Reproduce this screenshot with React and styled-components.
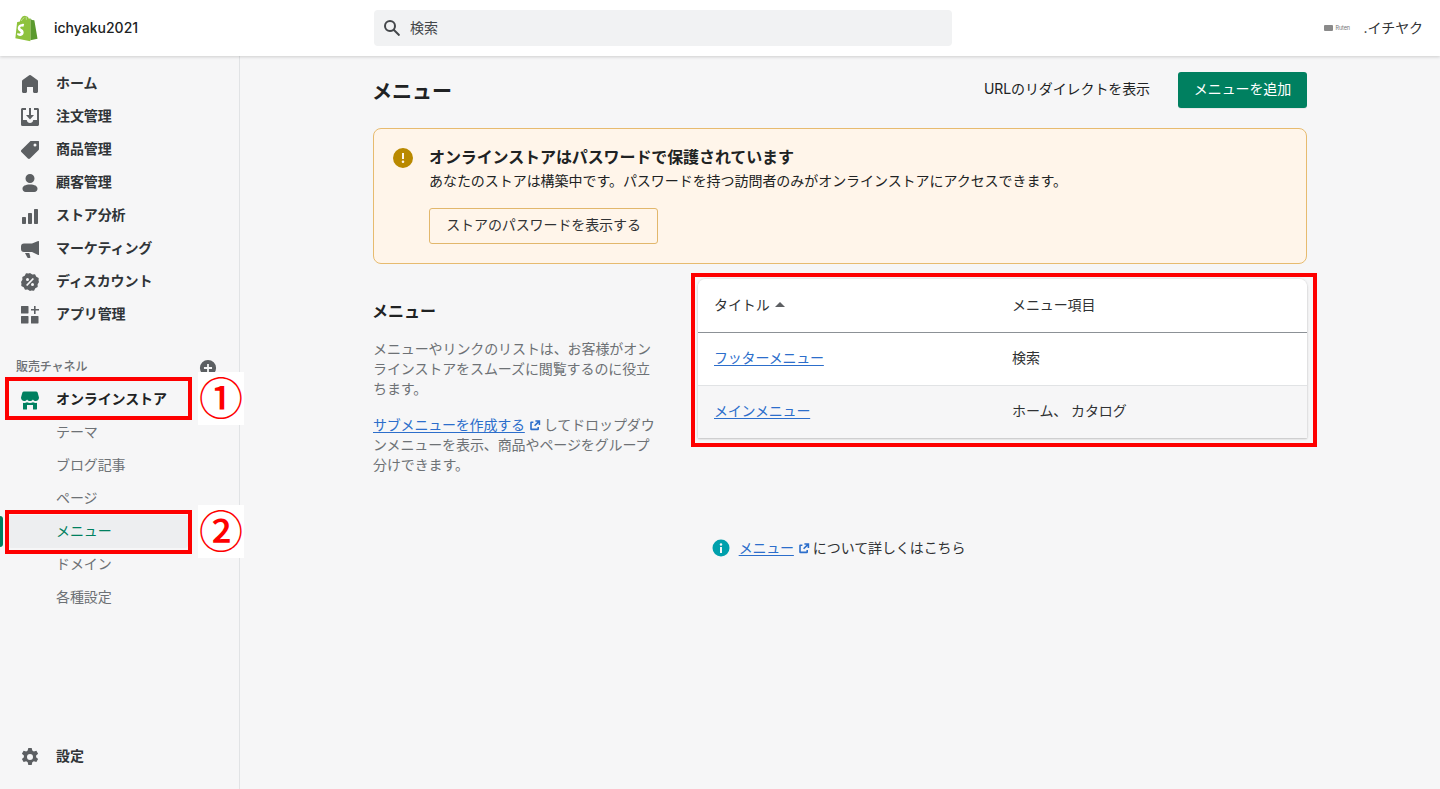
import React from 'react';
import styled, { createGlobalStyle } from 'styled-components';

const FONT = `Inter, "Noto Sans CJK JP", "Noto Sans", sans-serif`;

const GlobalStyle = createGlobalStyle`
  html, body { margin: 0; padding: 0; }
  body {
    background: #f6f6f7;
    color: #202223;
    font-family: ${FONT};
    font-size: 14px;
    line-height: 20px;
    letter-spacing: -0.1px;
  }
  * { box-sizing: border-box; }
`;

const Root = styled.div`
  position: relative;
  width: 1440px;
  height: 789px;
  overflow: hidden;
`;

const TopBar = styled.header`
  position: relative;
  z-index: 2;
  height: 56px;
  background: #fff;
  box-shadow: 0 1px 3px rgba(23, 24, 24, 0.18);
  display: flex;
  align-items: center;
`;

const Brand = styled.div`
  width: 374px;
  padding-left: 15px;
  display: flex;
  align-items: center;
  gap: 15px;
  font-weight: 500;
  letter-spacing: 0;
`;

const Search = styled.div`
  width: 578px;
  height: 36px;
  border-radius: 4px;
  background: #f1f2f3;
  display: flex;
  align-items: center;
  gap: 8px;
  padding-left: 8px;
  color: #44474a;
`;

const Account = styled.div`
  margin-left: auto;
  padding-right: 17px;
  display: flex;
  align-items: center;
  gap: 10px;
  color: #303234;
`;

const RutenLogo = styled.span`
  width: 29px;
  display: flex;
  align-items: center;
  gap: 2px;
  font-size: 5.5px;
  line-height: 8px;
  color: #777;
  white-space: nowrap;
  &::before {
    content: '';
    width: 9px;
    height: 6px;
    border-radius: 1px;
    background: #8a8a8a;
  }
`;

const Body = styled.div`
  display: flex;
  height: 733px;
`;

const Sidebar = styled.nav`
  width: 240px;
  flex: none;
  border-right: 1px solid #e1e3e5;
  padding: 11px 0 16px;
  display: flex;
  flex-direction: column;
`;

const NavItem = styled.div`
  height: 33px;
  padding: 0 0 2px 20px;
  display: flex;
  align-items: center;
  gap: 16px;
  font-weight: 600;
  color: ${p => (p.$active ? '#202223' : '#303437')};
  svg {
    flex: none;
    margin-top: 2px;
    color: ${p => (p.$active ? '#008060' : '#5c5f62')};
  }
`;

const ChannelHead = styled.div`
  margin-top: 22px;
  height: 30px;
  padding: 0 22px 2px 16px;
  display: flex;
  align-items: center;
  justify-content: space-between;
  font-size: 12px;
  color: #6d7175;
  font-weight: 500;
  svg { color: #5c5f62; margin-top: 2px; }
`;

const SubItem = styled.div`
  position: relative;
  height: 33px;
  width: 180px;
  margin-left: 8px;
  padding: 0 0 2px 48px;
  display: flex;
  align-items: center;
  border-radius: 3px;
  color: ${p => (p.$active ? '#008060' : '#6d7175')};
  background: ${p => (p.$active ? '#edeef0' : 'transparent')};
  ${p => p.$active && `
    &::before {
      content: '';
      position: absolute;
      left: -8px;
      top: 1px;
      bottom: 1px;
      width: 3px;
      border-radius: 0 3px 3px 0;
      background: #008060;
    }
  `}
`;

const SidebarBottom = styled.div`
  margin-top: auto;
`;

const Main = styled.main`
  flex: 1;
  min-width: 0;
`;

const Page = styled.div`
  width: 934px;
  margin: 0 auto;
  padding-top: 16px;
`;

const PageHeader = styled.div`
  height: 36px;
  display: flex;
  align-items: center;
`;

const PageTitle = styled.h1`
  margin: 4px 0 0 -1px;
  font-size: 20px;
  line-height: 28px;
  font-weight: 700;
  letter-spacing: 0;
`;

const HeaderActions = styled.div`
  margin-left: auto;
  display: flex;
  align-items: center;
  gap: 28px;
`;

const PlainAction = styled.span`
  color: #202223;
  margin-top: -2px;
`;

const PrimaryButton = styled.button`
  width: 129px;
  height: 36px;
  border: 0;
  border-radius: 3px;
  padding: 0 0 2px;
  background: #008060;
  color: #fff;
  font: inherit;
  letter-spacing: inherit;
  box-shadow: 0 1px 0 rgba(0, 0, 0, 0.05);
`;

const Banner = styled.section`
  margin-top: 20px;
  height: 136px;
  border: 1px solid #e7bb6f;
  border-radius: 8px;
  background: #fff5ea;
  padding: 18px 19px;
  display: flex;
  gap: 16px;
`;

const BannerIcon = styled.span`
  flex: none;
  color: #b98900;
  height: 20px;
  margin-top: 1px;
`;

const BannerTitle = styled.div`
  font-size: 16px;
  line-height: 20px;
  font-weight: 700;
`;

const BannerText = styled.div`
  margin-top: 4px;
  letter-spacing: -0.05px;
`;

const OutlineButton = styled.button`
  display: block;
  margin-top: 17px;
  width: 229px;
  height: 36px;
  border: 1px solid #e2b76c;
  border-radius: 3px;
  padding: 0 0 2px;
  background: transparent;
  color: #303234;
  font: inherit;
  letter-spacing: inherit;
`;

const Layout = styled.div`
  display: grid;
  grid-template-columns: 325px 1fr;
  align-items: start;
  margin-top: 15px;
`;

const Intro = styled.div`
  width: 288px;
  padding-top: 22px;
  color: #6d7175;
`;

const IntroHeading = styled.h2`
  margin: 0 0 18px -1px;
  font-size: 16px;
  line-height: 20px;
  font-weight: 700;
  letter-spacing: 0;
  color: #202223;
`;

const IntroText = styled.p`
  margin: 0 0 16px;
`;

const Link = styled.a`
  color: #2c6ecb;
  text-decoration: underline;
  text-underline-offset: 2px;
  letter-spacing: -0.2px;
`;

const ExtIcon = styled.svg`
  width: 16px;
  height: 16px;
  color: #2c6ecb;
  vertical-align: -3px;
  margin: 0 1px 0 2px;
`;

const TableCard = styled.div`
  background: #fff;
  border-radius: 8px 8px 0 0;
  box-shadow: 0 0 3px rgba(23, 24, 24, 0.12), 0 1px 2px rgba(23, 24, 24, 0.18);
  overflow: hidden;
`;

const TableRow = styled.div`
  display: grid;
  grid-template-columns: 298px 1fr;
  align-items: center;
  padding: 0 0 2px 16px;
  height: ${p => (p.$head ? '54px' : '53px')};
  background: ${p => (p.$shade ? '#f6f6f7' : '#fff')};
  border-bottom: 1px solid ${p => (p.$head ? '#8c9196' : '#e1e3e5')};
  &:last-child { border-bottom: 0; height: 52px; }
`;

const SortHead = styled.span`
  display: flex;
  align-items: center;
  gap: 5px;
  color: #303234;
`;

const Caret = styled.i`
  width: 0;
  height: 0;
  border-left: 5px solid transparent;
  border-right: 5px solid transparent;
  border-bottom: 5px solid #5c5f62;
`;

const Cell = styled.span`
  color: #303234;
`;

const Help = styled.div`
  margin-top: 47px;
  padding-right: 4px;
  display: flex;
  justify-content: center;
  align-items: center;
  gap: 8px;
  color: #303234;
  svg.info { color: #00a0ac; flex: none; }
`;

const Mark = styled.div`
  position: absolute;
  z-index: 3;
  left: ${p => p.$x}px;
  top: ${p => p.$y}px;
  width: ${p => p.$w}px;
  height: ${p => p.$h}px;
  border: 4px solid #fe0000;
`;

const Badge = styled.div`
  position: absolute;
  z-index: 3;
  left: 198px;
  top: ${p => p.$y}px;
  width: 46px;
  height: 53px;
  background: #fff;
  color: #fe0000;
  font-family: "Noto Sans CJK JP", sans-serif;
  font-size: 44px;
  font-weight: 500;
  line-height: 49px;
  text-align: center;
`;

const Icon = ({ children, size = 20 }) => (
  <svg width={size} height={size} viewBox="0 0 20 20" fill="currentColor" fillRule="evenodd">
    {children}
  </svg>
);

const icons = {
  home: <path d="M18 7.26V17.5c0 .84-.67 1.5-1.5 1.5h-2c-.83 0-1.5-.66-1.5-1.5V13H7v4.48C7 18.32 6.33 19 5.5 19h-2c-.83 0-1.5-.68-1.5-1.52V7.26a1.5 1.5 0 0 1 .62-1.21l6.58-4.82a1.48 1.48 0 0 1 1.6 0l6.58 4.82A1.5 1.5 0 0 1 18 7.26z" />,
  orders: <path d="M1 2.5C1 1.67 1.67 1 2.5 1H6v2H3v10h3.5c.3 0 .5.2.5.5 0 1.4 1.3 2.5 3 2.5s3-1.1 3-2.5c0-.3.2-.5.5-.5H17V3h-3V1h3.5c.83 0 1.5.67 1.5 1.5v15c0 .83-.67 1.5-1.5 1.5h-15A1.5 1.5 0 0 1 1 17.5v-15zM9 1h2v7h3l-4 4.5L6 8h3V1z" />,
  tag: <path d="M18.5 1h-7.4c-.4 0-.8.2-1.1.4L1.4 10c-.6.6-.6 1.5 0 2.1l6.5 6.5c.6.6 1.5.6 2.1 0l8.6-8.6c.3-.3.4-.7.4-1.1V1.5c0-.3-.2-.5-.5-.5zM15 6.5a1.5 1.5 0 1 1 0-3 1.5 1.5 0 0 1 0 3z" />,
  customers: <path d="M10 1a4.500 4.500 0 1 1 0 9 4.500 4.500 0 0 1 0-9zM10 11.500c4.600 0 7.500 1.600 7.500 4.200 0 1.800-1.300 3.300-3.200 3.300H5.700c-1.900 0-3.200-1.500-3.200-3.300 0-2.600 2.900-4.200 7.500-4.200z" />,
  analytics: <path d="M3 11h2c.6 0 1 .4 1 1v5c0 .6-.4 1-1 1H3c-.6 0-1-.4-1-1v-5c0-.6.4-1 1-1zM9 7h2c.6 0 1 .4 1 1v9c0 .6-.4 1-1 1H9c-.6 0-1-.4-1-1V8c0-.6.4-1 1-1zM15 3h2c.6 0 1 .4 1 1v13c0 .6-.4 1-1 1h-2c-.6 0-1-.4-1-1V4c0-.6.4-1 1-1z" />,
  marketing: <path d="M19 2.600v12.800c0 .4-.4.7-.8.5L12 13H4a3 3 0 0 1-3-3V7.500a3 3 0 0 1 3-3h8l6.200-2.400c.4-.2.8.1.8.500zM5 14h4.300l1 3.700a1 1 0 0 1-1 1.300H8.200a1 1 0 0 1-1-.7L5 14z" />,
  discount: <path d="M10 1l2.300 1.400 2.700-.1 1.300 2.400 2.400 1.300-.1 2.700L19 10l-1.400 2.300.1 2.700-2.400 1.300-1.300 2.400-2.700-.1L10 19l-2.300-1.400-2.700.1-1.300-2.400-2.400-1.300.1-2.700L1 10l1.400-2.300-.1-2.700 2.400-1.300L6 1.300l2.700.1L10 1zM7.500 6a1.500 1.500 0 1 0 0 3 1.500 1.500 0 0 0 0-3zm5 5a1.500 1.500 0 1 0 0 3 1.500 1.500 0 0 0 0-3zm.2-5L6 13l1.300 1L14 7l-1.300-1z" />,
  apps: <path d="M1.500 1H8c.3 0 .5.2.5.5V8c0 .3-.2.5-.5.5H1.500A.5.500 0 0 1 1 8V1.500c0-.3.2-.5.5-.5zM1.500 11H8c.3 0 .5.2.5.5V18c0 .3-.2.5-.5.5H1.500A.5.500 0 0 1 1 18v-6.500c0-.3.2-.5.5-.5zM11.500 11H18c.3 0 .5.2.5.5V18c0 .3-.2.5-.5.5h-6.500a.5.500 0 0 1-.5-.5v-6.500c0-.3.2-.5.5-.5zM14 1h1.600v3H19v1.600h-3.400V9H14V5.600h-3V4h3V1z" />,
  store: <path d="M4 1.500h12c.8 0 1.300.4 1.600 1.100L19 7.500c0 2-1.500 3.500-3.200 3.500-1.100 0-2-.5-2.900-1.500-.7 1-1.800 1.500-2.900 1.500s-2.200-.5-2.900-1.500c-.9 1-1.800 1.500-2.900 1.500C2.500 11 1 9.500 1 7.500l1.400-4.900C2.700 1.900 3.200 1.500 4 1.500zM3 12.800c1.200.4 2.600.2 4-.6 1.900 1 4.100 1 6 0 1.400.8 2.800 1 4 .6V19c0 .3-.2.500-.5.500H13V15H7v4.500H3.500A.5.500 0 0 1 3 19v-6.200z" />,
  settings: <path d="M11.700 1l.6 2.600 1.500.9 2.600-.8 1.700 3-2 1.800v1.800l2 1.800-1.700 3-2.600-.8-1.500.9-.6 2.800H8.300l-.6-2.800-1.500-.9-2.600.8-1.700-3 2-1.800V8.500l-2-1.800 1.700-3 2.600.8 1.500-.9L8.300 1h3.400zM10 7a3 3 0 1 0 0 6 3 3 0 0 0 0-6z" />,
};

const External = () => (
  <ExtIcon viewBox="0 0 20 20" fill="currentColor">
    <path d="M15 12.500V15a1.500 1.500 0 0 1-1.500 1.500h-8A1.500 1.500 0 0 1 4 15V7a1.500 1.500 0 0 1 1.500-1.500H8V7.500H6v7h7v-2h2z" />
    <path d="M10.500 4h6v6h-2V7.400l-4.300 4.300-1.400-1.400L13.100 6h-2.600V4z" />
  </ExtIcon>
);

const ShopifyLogo = () => (
  <svg width="24" height="27" viewBox="0 0 26 28">
    <path d="M21 5.400c0-.2-.2-.3-.3-.3l-2.300-.2-1.800-1.800v23.700l7.800-1.700L21 5.400z" fill="#5b9a2f" />
    <path d="M16.400 3c-.2 0-.3.100-.4.100l-1 .3C14.500 1.900 13.600.8 12.200.8h-.2C11.600.3 11.100.1 10.700.1 7.400.1 5.800 4.200 5.300 6.300l-2.300.7c-.7.200-.7.200-.8.900L0.400 24.600 16.600 27.700V3h-.2z" fill="#8ec23c" />
    <path d="M9.900 9.500l-.8 2.700s-.9-.4-1.900-.4c-1.500.1-1.500 1-1.500 1.300.1 1.300 3.500 1.600 3.700 4.700.2 2.400-1.300 4.100-3.300 4.200-2.500.2-3.800-1.300-3.800-1.300l.5-2.200s1.300 1 2.400.9c.7 0 1-.6.900-1-.1-1.700-2.900-1.600-3.100-4.400-.1-2.400 1.400-4.800 4.900-5 1.400-.1 2 .3 2 .3z" fill="#fff" />
    <path d="M10.200 2.200c-1.800.7-2.900 2.800-3.400 3.700M12 1.500c.3 1 .3 2.200.3 3" stroke="#fff" strokeWidth=".7" fill="none" opacity=".7" />
  </svg>
);

const mainNav = [
  ['home', 'ホーム'],
  ['orders', '注文管理'],
  ['tag', '商品管理'],
  ['customers', '顧客管理'],
  ['analytics', 'ストア分析'],
  ['marketing', 'マーケティング'],
  ['discount', 'ディスカウント'],
  ['apps', 'アプリ管理'],
];

const storeNav = ['テーマ', 'ブログ記事', 'ページ', 'メニュー', 'ドメイン', '各種設定'];

export default function App() {
  return (
    <Root>
      <GlobalStyle />
      <TopBar>
        <Brand>
          <ShopifyLogo />
          ichyaku2021
        </Brand>
        <Search>
          <Icon>
            <path d="M8 12a4 4 0 1 1 0-8 4 4 0 0 1 0 8zm9.700 4.300l-4.800-4.800A6 6 0 0 0 14 8 6 6 0 0 0 2 8a6 6 0 0 0 6 6c1.300 0 2.500-.4 3.500-1.100l4.800 4.800a1 1 0 0 0 1.400-1.400z" />
          </Icon>
          検索
        </Search>
        <Account>
          <RutenLogo>Ruten</RutenLogo>
          .イチヤク
        </Account>
      </TopBar>

      <Body>
        <Sidebar>
          {mainNav.map(([icon, label]) => (
            <NavItem key={label}>
              <Icon>{icons[icon]}</Icon>
              {label}
            </NavItem>
          ))}

          <ChannelHead>
            販売チャネル
            <Icon size={18}>
              <path d="M10 1a9 9 0 1 1 0 18 9 9 0 0 1 0-18zM9 5.500V9H5.500v2H9v3.500h2V11h3.500V9H11V5.500H9z" />
            </Icon>
          </ChannelHead>
          <NavItem $active>
            <Icon>{icons.store}</Icon>
            オンラインストア
          </NavItem>
          {storeNav.map(label => (
            <SubItem key={label} $active={label === 'メニュー'}>{label}</SubItem>
          ))}

          <SidebarBottom>
            <NavItem>
              <Icon>{icons.settings}</Icon>
              設定
            </NavItem>
          </SidebarBottom>
        </Sidebar>

        <Main>
          <Page>
            <PageHeader>
              <PageTitle>メニュー</PageTitle>
              <HeaderActions>
                <PlainAction>URLのリダイレクトを表示</PlainAction>
                <PrimaryButton>メニューを追加</PrimaryButton>
              </HeaderActions>
            </PageHeader>

            <Banner>
              <BannerIcon>
                <Icon>
                  <path d="M10 0a10 10 0 1 1 0 20 10 10 0 0 1 0-20zM9 5v6h2V5H9zm1 7.500a1.300 1.300 0 1 0 0 2.600 1.300 1.300 0 0 0 0-2.600z" />
                </Icon>
              </BannerIcon>
              <div>
                <BannerTitle>オンラインストアはパスワードで保護されています</BannerTitle>
                <BannerText>あなたのストアは構築中です。パスワードを持つ訪問者のみがオンラインストアにアクセスできます。</BannerText>
                <OutlineButton>ストアのパスワードを表示する</OutlineButton>
              </div>
            </Banner>

            <Layout>
              <Intro>
                <IntroHeading>メニュー</IntroHeading>
                <IntroText>メニューやリンクのリストは、お客様がオンラインストアをスムーズに閲覧するのに役立ちます。</IntroText>
                <IntroText>
                  <Link>サブメニューを作成する</Link>
                  <External />
                  してドロップダウンメニューを表示、商品やページをグループ分けできます。
                </IntroText>
              </Intro>
              <TableCard>
                <TableRow $head>
                  <SortHead>タイトル <Caret /></SortHead>
                  <Cell>メニュー項目</Cell>
                </TableRow>
                <TableRow>
                  <span><Link>フッターメニュー</Link></span>
                  <Cell>検索</Cell>
                </TableRow>
                <TableRow $shade>
                  <span><Link>メインメニュー</Link></span>
                  <Cell>ホーム、 カタログ</Cell>
                </TableRow>
              </TableCard>
            </Layout>

            <Help>
              <svg className="info" width="20" height="20" viewBox="0 0 20 20" fill="currentColor" fillRule="evenodd">
                <path d="M10 1.500a8.500 8.500 0 1 1 0 17 8.500 8.500 0 0 1 0-17zM9 9v6h2V9H9zm1-3.800a1.300 1.300 0 1 0 0 2.600 1.300 1.300 0 0 0 0-2.600z" />
              </svg>
              <span>
                <Link>メニュー</Link>
                <External />
                について詳しくはこちら
              </span>
            </Help>
          </Page>
        </Main>
      </Body>

      <Mark $x={5} $y={377} $w={187} $h={43} />
      <Mark $x={5} $y={510} $w={187} $h={44} />
      <Mark $x={691} $y={273} $w={626} $h={174} />
      <Badge $y={372}>①</Badge>
      <Badge $y={505}>②</Badge>
    </Root>
  );
}
